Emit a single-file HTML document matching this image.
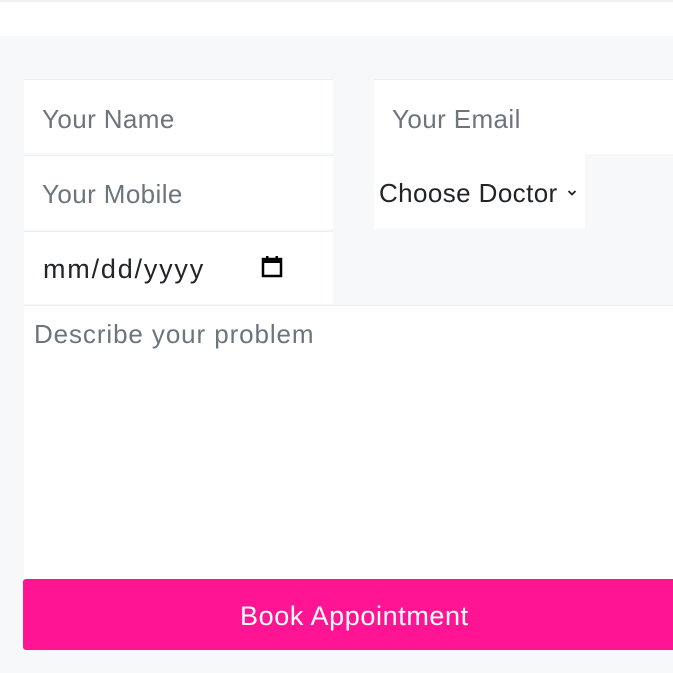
<!DOCTYPE html>
<html><head><style>
body{margin:0;width:673px;height:673px;overflow:hidden;background:#f7f8fa;font-family:"Liberation Sans",sans-serif;position:relative}
.top{position:absolute;left:0;top:0;width:673px;height:36px;background:#fff;border-top:2px solid #eef0f2;box-sizing:border-box}
.f{position:absolute;background:#fff;box-sizing:border-box;font-size:26px;letter-spacing:0.4px;color:#6c757d;line-height:1}
.f span{position:absolute;white-space:nowrap}
</style></head><body>
<div class="top"></div>
<div class="f" style="left:24px;top:79px;width:309px;height:74px;border-top:1px solid #eceef0"><span style="left:18px;top:26px">Your Name</span></div>
<div class="f" style="left:374px;top:79px;width:299px;height:75px;border-top:1px solid #eceef0"><span style="left:18px;top:26px">Your Email</span></div>
<div class="f" style="left:24px;top:155px;width:309px;height:74px;border-top:1px solid #eceef0"><span style="left:18px;top:25px">Your Mobile</span></div>
<div class="f" style="left:374px;top:154px;width:211px;height:75px;color:#212529"><span style="left:5px;top:26px">Choose Doctor</span>
<svg style="position:absolute;left:193px;top:35px" width="10" height="8" viewBox="0 0 10 8"><path d="M1.5 2l3.5 3.5 3.5-3.5" fill="none" stroke="#222" stroke-width="1.8"/></svg></div>
<div class="f" style="left:24px;top:231px;width:309px;height:73px;color:#212529;border-top:1px solid #eceef0"><span style="left:19px;top:24px;font-size:27px;letter-spacing:1.8px">mm/dd/yyyy</span>
<svg style="position:absolute;left:237px;top:23px" width="22" height="24" viewBox="0 0 22 24"><rect x="2" y="4" width="18" height="17" fill="none" stroke="#000" stroke-width="2.5"/><rect x="2" y="4" width="18" height="4" fill="#000"/><rect x="5" y="1" width="2.5" height="4" fill="#000"/><rect x="14.5" y="1" width="2.5" height="4" fill="#000"/></svg></div>
<div class="f" style="left:24px;top:305px;width:649px;height:274px;border-top:1px solid #eceef0"><span style="left:10px;top:15px;letter-spacing:0.9px">Describe your problem</span></div>
<div class="f" style="left:23px;top:579px;width:660px;height:71px;background:#ff1493;color:#fff;border-radius:3px;font-size:27px;letter-spacing:0.6px"><span style="left:217px;top:24px">Book Appointment</span></div>
</body></html>
